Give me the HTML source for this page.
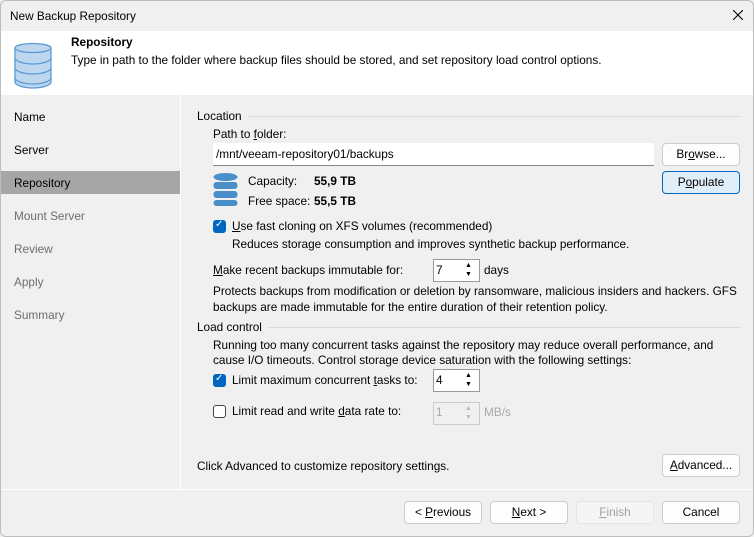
<!DOCTYPE html>
<html><head><meta charset="utf-8"><style>
*{margin:0;padding:0;box-sizing:border-box}
body{width:754px;height:537px;overflow:hidden;background:#f0f0f0;font-family:"Liberation Sans",sans-serif;font-size:11.8px;color:#000;position:relative}
.a{position:absolute;white-space:nowrap}
.btn{position:absolute;height:23px;border:1px solid #ccc;border-radius:4px;background:#fdfdfd;text-align:center;line-height:21px}
.grey{color:#6d6d6d}
.cb{position:absolute;width:13px;height:13px;border-radius:3px}
.spin{position:absolute;height:23px;border:1px solid #999;background:#fff}
.sep{position:absolute;height:1px;background:#d9d9d9}
u{text-decoration:underline}
</style></head><body>
<div style="position:absolute;left:0;top:0;width:754px;height:537px;border:1px solid #bdbdbd;border-radius:6px"></div>
<div class="a" style="left:10px;top:9px">New Backup Repository</div>
<svg class="a" style="left:733px;top:10px" width="10" height="10" viewBox="0 0 10 10"><path d="M0 0L10 10M10 0L0 10" stroke="#000" stroke-width="1.1"/></svg>
<div style="position:absolute;left:1px;top:31px;width:752px;height:64px;background:#fff"></div>
<svg class="a" style="left:14px;top:42px" width="38" height="48" viewBox="0 0 38 48">
<g fill="#bdd7ee" stroke="#5b9bd5" stroke-width="1.3">
<path d="M1 36v4c0 3 8 6 18 6s18-3 18-6v-4"/>
<path d="M1 26v10c0 3 8 6 18 6s18-3 18-6V26"/>
<path d="M1 16v10c0 3 8 6 18 6s18-3 18-6V16"/>
<path d="M1 6v10c0 3 8 6 18 6s18-3 18-6V6"/>
<ellipse cx="19" cy="6" rx="18" ry="4.5"/>
</g></svg>
<div class="a" style="left:71px;top:35px;font-weight:bold">Repository</div>
<div class="a" style="left:71px;top:53px">Type in path to the folder where backup files should be stored, and set repository load control options.</div>
<div style="position:absolute;left:180px;top:95px;width:1px;height:394px;background:#fff"></div>
<div style="position:absolute;left:1px;top:171px;width:179px;height:23px;background:#a6a6a6"></div>
<div class="a" style="left:14px;top:110px">Name</div>
<div class="a" style="left:14px;top:143px">Server</div>
<div class="a" style="left:14px;top:176px">Repository</div>
<div class="a grey" style="left:14px;top:209px">Mount Server</div>
<div class="a grey" style="left:14px;top:242px">Review</div>
<div class="a grey" style="left:14px;top:275px">Apply</div>
<div class="a grey" style="left:14px;top:308px">Summary</div>
<div class="a" style="left:197px;top:109px">Location</div>
<div class="sep" style="left:248px;top:116px;width:493px"></div>
<div class="a" style="left:213px;top:127px">Path to <u>f</u>older:</div>
<div style="position:absolute;left:213px;top:143px;width:441px;height:23px;background:#fff;border-bottom:1px solid #888"></div>
<div class="a" style="left:216px;top:147px">/mnt/veeam-repository01/backups</div>
<div class="btn" style="left:662px;top:143px;width:78px">Br<u>o</u>wse...</div>
<div class="btn" style="left:662px;top:171px;width:78px;border-color:#0067c0;background:#e0eef9">P<u>o</u>pulate</div>
<svg class="a" style="left:213px;top:173px" width="25" height="33" viewBox="0 0 25 33">
<g fill="#4a8fc9"><ellipse cx="12.5" cy="4" rx="12" ry="4"/><rect x=".5" y="9" width="24" height="7" rx="3"/><rect x=".5" y="18" width="24" height="7" rx="3"/><rect x=".5" y="27" width="24" height="6" rx="3"/></g></svg>
<div class="a" style="left:248px;top:174px">Capacity:</div>
<div class="a" style="left:314px;top:174px;font-weight:bold">55,9 TB</div>
<div class="a" style="left:248px;top:194px">Free space:</div>
<div class="a" style="left:314px;top:194px;font-weight:bold">55,5 TB</div>
<div class="cb" style="left:213px;top:220px;background:#0067c0"></div>
<div class="a" style="left:215px;top:219px;color:#fff;font-size:10px">✓</div>
<div class="a" style="left:232px;top:219px"><u>U</u>se fast cloning on XFS volumes (recommended)</div>
<div class="a" style="left:232px;top:237px">Reduces storage consumption and improves synthetic backup performance.</div>
<div class="a" style="left:213px;top:263px"><u>M</u>ake recent backups immutable for:</div>
<div class="spin" style="left:433px;top:259px;width:47px"></div>
<div class="a" style="left:436px;top:263px">7</div>
<div class="a" style="left:465px;top:261px;font-size:7px;line-height:9px">▲<br>▼</div>
<div class="a" style="left:484px;top:263px">days</div>
<div class="a" style="left:213px;top:284px">Protects backups from modification or deletion by ransomware, malicious insiders and hackers. GFS</div>
<div class="a" style="left:213px;top:300px">backups are made immutable for the entire duration of their retention policy.</div>
<div class="a" style="left:197px;top:320px">Load control</div>
<div class="sep" style="left:268px;top:327px;width:473px"></div>
<div class="a" style="left:213px;top:338px">Running too many concurrent tasks against the repository may reduce overall performance, and</div>
<div class="a" style="left:213px;top:353px">cause I/O timeouts. Control storage device saturation with the following settings:</div>
<div class="cb" style="left:213px;top:374px;background:#0067c0"></div>
<div class="a" style="left:215px;top:373px;color:#fff;font-size:10px">✓</div>
<div class="a" style="left:232px;top:373px">Limit maximum concurrent <u>t</u>asks to:</div>
<div class="spin" style="left:433px;top:369px;width:47px"></div>
<div class="a" style="left:436px;top:373px">4</div>
<div class="a" style="left:465px;top:371px;font-size:7px;line-height:9px">▲<br>▼</div>
<div class="cb" style="left:213px;top:405px;border:1px solid #444;background:#fff"></div>
<div class="a" style="left:232px;top:404px">Limit read and write <u>d</u>ata rate to:</div>
<div class="spin" style="left:433px;top:402px;width:47px;border-color:#ccc;background:#f0f0f0"></div>
<div class="a grey" style="left:436px;top:405px;color:#aaa">1</div>
<div class="a" style="left:465px;top:404px;font-size:7px;line-height:9px;color:#bbb">▲<br>▼</div>
<div class="a" style="left:484px;top:405px;color:#aaa">MB/s</div>
<div class="a" style="left:197px;top:459px">Click Advanced to customize repository settings.</div>
<div class="btn" style="left:662px;top:454px;width:78px"><u>A</u>dvanced...</div>
<div style="position:absolute;left:1px;top:489px;width:752px;height:1px;background:#fff"></div>
<div class="btn" style="left:404px;top:501px;width:78px">&lt; <u>P</u>revious</div>
<div class="btn" style="left:490px;top:501px;width:78px"><u>N</u>ext &gt;</div>
<div class="btn" style="left:576px;top:501px;width:78px;border-color:#e5e5e5;background:#f5f5f5;color:#a0a0a0"><u>F</u>inish</div>
<div class="btn" style="left:662px;top:501px;width:78px">Cancel</div>
</body></html>
